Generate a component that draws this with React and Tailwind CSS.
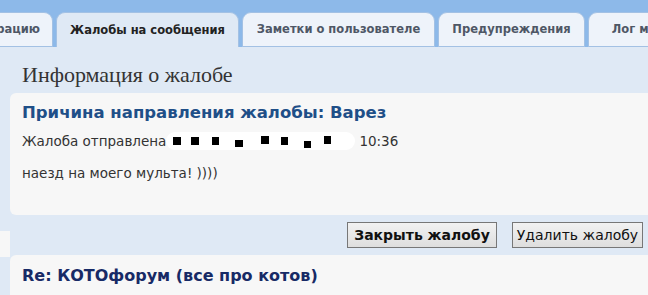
const tabs = [
  { label: 'Жалобы на сообщения', w: 'w-[183px]', active: true },
  { label: 'Заметки о пользователе', w: 'w-[193px]' },
  { label: 'Предупреждения', w: 'w-[147px]' },
  { label: 'Лог модерации', w: 'w-[150px]' },
];

// redaction marks over the date: [left margin, vertical offset, size]
const marks = [
  ['ml-[7px]', 'translate-y-[0px]', 'w-[8px] h-[8px]'],
  ['ml-[10px]', 'translate-y-[0px]', 'w-[8px] h-[8px]'],
  ['ml-[13px]', 'translate-y-[0px]', 'w-[7px] h-[8px]'],
  ['ml-[16px]', 'translate-y-[2px]', 'w-[8px] h-[7px]'],
  ['ml-[18px]', 'translate-y-[-1px]', 'w-[8px] h-[8px]'],
  ['ml-[12px]', 'translate-y-[0px]', 'w-[7px] h-[8px]'],
  ['ml-[16px]', 'translate-y-[3px]', 'w-[7px] h-[7px]'],
  ['ml-[13px]', 'translate-y-[-1px]', 'w-[7px] h-[8px]'],
];

export default function App() {
  return (
    <div className="w-[648px] h-[295px] overflow-hidden bg-[#dfe9f5] font-['DejaVu_Sans',sans-serif] text-[#333]">
      {/* Tabs */}
      <div className="h-[47px] bg-[#8db9e9] flex items-end gap-[3px] whitespace-nowrap">
        <div className="h-[35px] w-[53px] shrink-0 flex items-center justify-end pr-[12px] bg-[#eef3fa] border border-l-0 border-[#a3c1e4] rounded-tr-[9px] text-[11.5px] font-bold text-[#4e5766]">
          рацию
        </div>
        {tabs.map((t) => (
          <div
            key={t.label}
            className={`${t.w} shrink-0 flex items-center justify-center pt-[1px] rounded-t-[9px] border border-[#a3c1e4] text-[11.5px] font-bold ${
              t.active
                ? 'h-[35px] border-b-0 bg-[#dfe9f5] text-[#222]'
                : 'h-[35px] bg-[#eef3fa] text-[#4e5766]'
            }`}
          >
            {t.label}
          </div>
        ))}
      </div>

      <h2 className="pl-[22px] pt-[16px] pb-[6px] font-['Liberation_Serif',serif] text-[22px] leading-[24px] text-[#333]">
        Информация о жалобе
      </h2>

      {/* Report card */}
      <div className="ml-[10px] h-[122px] bg-[#f7f7f7] rounded-l-[6px] pl-[12px] pt-[10px]">
        <div className="text-[16.5px] leading-[20px] font-bold text-[#1f4f88]">
          Причина направления жалобы: Варез
        </div>
        <div className="mt-[9px] flex items-center text-[13.5px] leading-[18px]">
          <span>Жалоба отправлена</span>
          <span className="flex items-center bg-white rounded-full pr-[24px] h-[18px]">
            {marks.map(([ml, ty, sz], i) => (
              <span key={i} className={`${ml} ${ty} ${sz} bg-black inline-block`} />
            ))}
          </span>
          <span className="ml-[4px]">10:36</span>
        </div>
        <div className="mt-[14px] text-[13.5px] leading-[18px]">наезд на моего мульта! ))))</div>
      </div>

      {/* Buttons */}
      <div className="flex justify-end gap-[15px] pr-[5px] pt-[7px] h-[40px]">
        <button className="h-[26px] w-[150px] border border-[#777] bg-gradient-to-b from-[#f2f2f2] to-[#dedede] text-[14px] font-bold text-[#111]">
          Закрыть жалобу
        </button>
        <button className="h-[26px] w-[131px] border border-[#777] bg-gradient-to-b from-[#f2f2f2] to-[#dedede] text-[14px] text-[#111]">
          Удалить жалобу
        </button>
      </div>

      {/* Next card */}
      <div className="relative">
        <div className="absolute left-0 top-[-24px] w-[10px] h-[26px] bg-[#f7f7f7]" />
        <div className="ml-[10px] h-[60px] bg-[#f7f7f7] rounded-tl-[6px] pl-[12px] pt-[10px]">
          <div className="text-[16px] leading-[22px] font-bold text-[#172a66]">Re: КОТОфорум (все про котов)</div>
        </div>
      </div>
    </div>
  );
}
